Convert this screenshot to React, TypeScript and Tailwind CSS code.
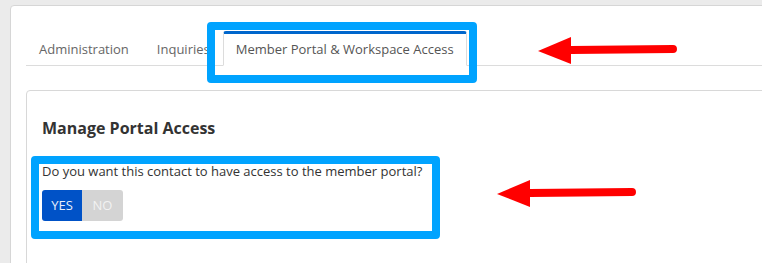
const Arrow = ({ className }: { className: string }) => (
  <svg className={className} width="140" height="30" viewBox="0 0 140 30">
    <path d="M33 14 L135 13" stroke="#ff0000" strokeWidth="8" strokeLinecap="round" />
    <polygon points="0,15 33,1 33,28" fill="#ff0000" />
  </svg>
);

export default function App() {
  return (
    <div
      className="relative w-[762px] h-[263px] overflow-hidden bg-[#ebebeb] pl-[10px] pt-[5px]"
      style={{ fontFamily: '"Open Sans", "Liberation Sans", sans-serif' }}
    >
      <div className="w-[800px] h-[300px] bg-white border border-[#d6d6d6] rounded-tl-[4px] pl-[15px] pt-[25px]">
        <ul className="flex border-b border-[#dcdcdc] text-[13px] text-[#666]">
          <li className="mr-[2px] -mb-px px-3 pt-[3px] h-[35px] flex items-center border border-transparent">
            Administration
          </li>
          <li className="-mb-px px-3 pt-[3px] h-[35px] flex items-center border border-transparent">
            Inquiries
          </li>
          <li className="-mb-px px-3 pt-[1px] h-[35px] flex items-center bg-white border border-[#dcdcdc] border-b-white border-t-[3px] border-t-[#0066cc] text-[#555] rounded-t-[3px]">
            Member Portal &amp; Workspace Access
          </li>
        </ul>

        <div className="mt-[24px] border border-[#d8d8d8] rounded-[4px] px-[15px] pt-[26px] h-[200px]">
          <h3 className="text-[16px] font-bold text-[#333] leading-[22px]">Manage Portal Access</h3>
          <p className="mt-[23px] text-[13px] text-[#333] leading-[18px]">
            Do you want this contact to have access to the member portal?
          </p>
          <div className="mt-[10px] flex text-[13px]">
            <button className="h-[31px] w-[40px] bg-[#0052c7] text-[#e8eefa] rounded-l-[3px]">YES</button>
            <button className="h-[31px] w-[41px] bg-[#d4d4d4] text-[#f2f2f2] rounded-r-[3px]">NO</button>
          </div>
        </div>
      </div>

      <div className="absolute left-[207px] top-[22px] w-[270px] h-[61px] border-[8px] border-[#00a3ff] rounded-[4px]" />
      <div className="absolute left-[31px] top-[156px] w-[409px] h-[83px] border-[8px] border-[#00a3ff] rounded-[4px]" />

      <Arrow className="absolute left-[538px] top-[36px]" />
      <Arrow className="absolute left-[497px] top-[179px]" />
    </div>
  );
}
